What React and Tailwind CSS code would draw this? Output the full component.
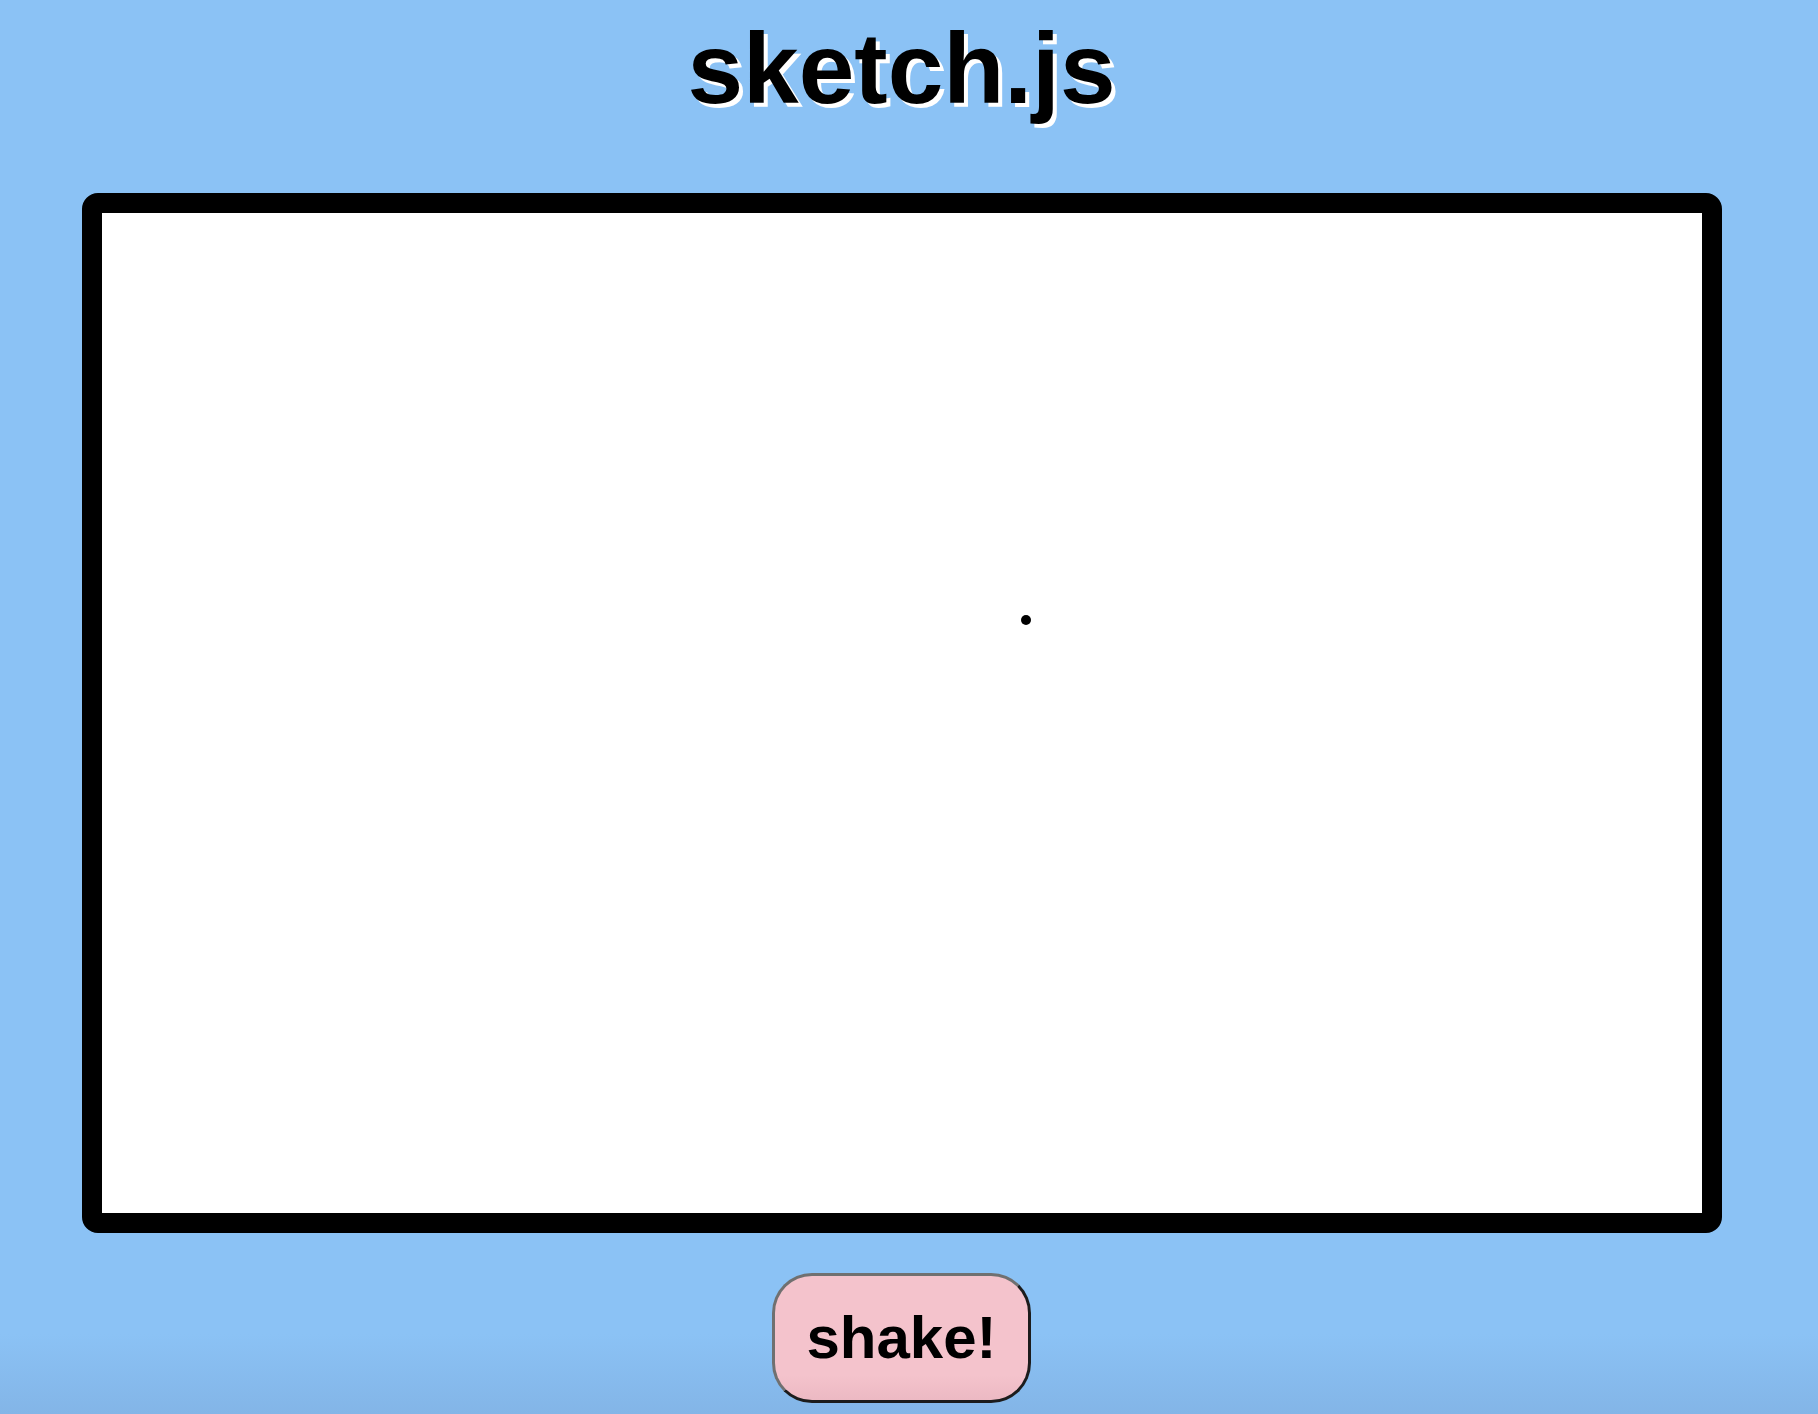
export default function App() {
    // pen position on the board
    const pen = { x: 919, y: 402 }

    return (
        <div className="min-h-[1414px] w-full bg-[linear-gradient(to_bottom,#8bc2f5_calc(100%-80px),#83b5e7)] font-['Liberation_Sans',Arial,sans-serif]">
            <div className="w-[1803px] flex flex-col items-center">
                <h1 className="mt-[18px] text-[100px] leading-[100px] font-bold text-black [text-shadow:4px_4px_0_#fff]">sketch.js</h1>

                <div className="mt-[75px] relative w-[1640px] h-[1040px] border-[20px] border-black rounded-[16px] bg-white">
                    <div className="absolute w-[10px] h-[10px] rounded-full bg-black" style={{ left: pen.x, top: pen.y }} />
                </div>

                <button className="mt-[40px] w-[259px] h-[130px] rounded-[40px] border-[3px] border-t-[#707070] border-l-[#707070] border-b-[#1c1c1c] border-r-[#1c1c1c] bg-[linear-gradient(to_bottom,#f4c3cc_80%,#ecb9c3)] text-[60px] font-bold text-black leading-none">
                    shake!
                </button>
            </div>
        </div>
    )
}
